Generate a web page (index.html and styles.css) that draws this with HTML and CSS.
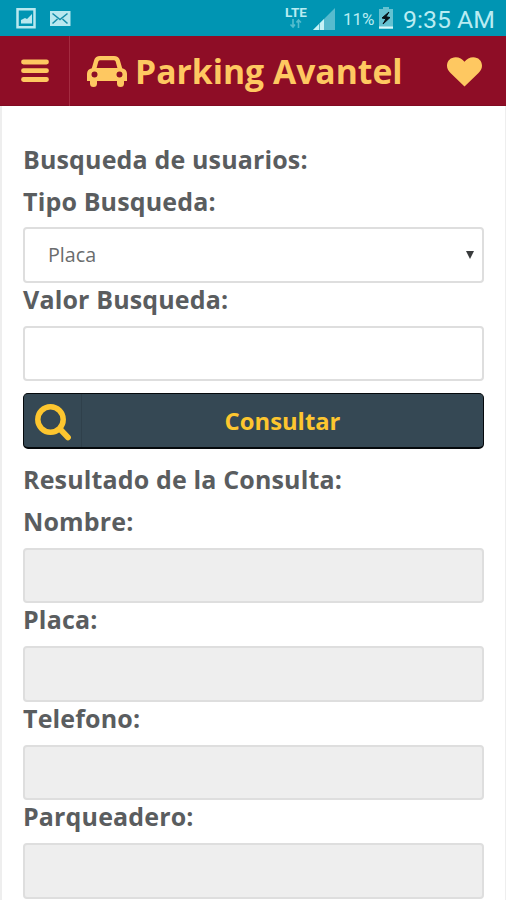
FILE: index.html
```html
<!DOCTYPE html>
<html lang="es">
<head>
<meta charset="utf-8">
<title>Parking Avantel</title>
<link rel="stylesheet" href="styles.css">
</head>
<body>
<div class="status">
  <svg class="notifications" width="56" height="24" viewBox="0 0 56 24">
    <path d="M1.500 2.200h17v18h-17z" fill="none" stroke="#b9e8ef" stroke-width="2.500"/>
    <path d="M5 16.500V13l4-2 2 1 5-5v9.500z" fill="#b9e8ef"/>
    <path d="M34 4h20.500v15H34z" fill="#b9e8ef"/>
    <path d="M36.500 6.500l7.500 6 7.500-6M36.500 16.500l5-4.500M51.500 16.500l-5-4.500" fill="none" stroke="#168eaa" stroke-width="1.600"/>
  </svg>
  <div class="network"><span class="lte">LTE</span>
    <svg width="14" height="10" viewBox="0 0 14 10"><path d="M4 0v8M1.500 5.500L4 8l2-2.500M9.500 9V1M7.500 3.500l2-2.500 2.500 2.500" fill="none" stroke="#55bdce" stroke-width="1.600"/></svg>
  </div>
  <svg class="signal" width="24" height="24" viewBox="0 0 24 24"><path d="M1 23L23 1v22z" fill="#57bbce"/><path d="M1 23L12 12v11z" fill="#c7f2f6"/><path d="M7.500 16v7" stroke="#57bbce"/></svg>
  <span class="percent">11%</span>
  <svg class="battery" width="16" height="24" viewBox="0 0 16 24"><path d="M5 0h6v2h4v20H1V2h4z" fill="#65c2d1"/><path d="M1 19.500h14v2H1z" fill="#d8f8fa"/><path d="M11 5L4 11l4 .8-3 5.200 7-6.500-4-.8z" fill="#061116" stroke="#061116"/></svg>
  <span class="time">9:35 AM</span>
</div>
<header class="bar">
  <div class="menu"><svg width="28" height="24" viewBox="0 0 28 24"><path d="M2.500 3h23M2.500 11.700h23M2.500 20.500h23" stroke="#fec861" stroke-width="4.800" stroke-linecap="round"/></svg></div>
  <svg class="car" width="40" height="32" viewBox="0 0 40 32"><path fill="#fec861" fill-rule="evenodd" d="M13 0h14c3 0 5 1.500 5.800 4l2.400 8.200c2.800.5 4.800 2.600 4.800 5.500V25h-3v2.500a3.500 3.500 0 0 1-7 0V25H10v2.500a3.500 3.500 0 0 1-7 0V25H0v-7.300c0-2.900 2-5 4.800-5.500L7.200 4C8 1.500 10 0 13 0zM13.500 4.200c-1.200 0-1.900.5-2.200 1.500L9.600 12h20.800l-1.700-6.300c-.3-1-1-1.500-2.200-1.500zM7.500 15.500a3 3 0 1 0 0 6 3 3 0 0 0 0-6zM32.500 15.500a3 3 0 1 0 0 6 3 3 0 0 0 0-6z"/></svg>
  <h1 class="title">Parking Avantel</h1>
  <svg class="heart" width="35" height="30" viewBox="0 0 35 30"><path fill="#fec861" d="M17.500 29.500L3.500 16C1.200 13.700 0 11.300 0 8.700 0 3.700 3.700.2 8.700.2c3.600 0 6.700 1.700 8.800 4.600C19.600 1.900 22.700.2 26.300.2c5 0 8.700 3.500 8.700 8.500 0 2.600-1.200 5-3.500 7.300z"/></svg>
</header>
<main class="page">
  <h2 class="label heading">Busqueda de usuarios:</h2>
  <div class="label heading">Tipo Busqueda:</div>
  <div class="field select"><span class="value">Placa</span><svg width="8" height="8" viewBox="0 0 8 8"><path d="M0 0h8L4 8z" fill="#393b3c"/></svg></div>
  <div class="label">Valor Busqueda:</div>
  <div class="field"></div>
  <div class="button">
    <div class="search"><svg width="36" height="37" viewBox="0 0 36 37"><circle cx="15.500" cy="15.500" r="12.700" fill="none" stroke="#fdc62f" stroke-width="5.500"/><path d="M25 25l8 8.500" stroke="#fdc62f" stroke-width="5.800" stroke-linecap="round"/></svg></div>
    <span class="caption">Consultar</span>
  </div>
  <h2 class="label heading result">Resultado de la Consulta:</h2>
  <div class="label heading">Nombre:</div>
  <div class="field disabled"></div>
  <div class="label">Placa:</div>
  <div class="field disabled"></div>
  <div class="label">Telefono:</div>
  <div class="field disabled"></div>
  <div class="label">Parqueadero:</div>
  <div class="field disabled"></div>
</main>
</body>
</html>
```
FILE: styles.css
```css
* { box-sizing: border-box; }
body {
  margin: 0;
  height: 900px;
  overflow: hidden;
  background: #fff;
  font-family: "Open Sans", sans-serif;
  color: #5a5d5f;
}
svg { display: block; flex: none; }
.status {
  display: flex;
  align-items: flex-start;
  height: 36px;
  padding: 7px 12px 0 16px;
  background: #0095b3;
  color: #b9ecf2;
  font-family: Roboto, sans-serif;
}
.network {
  display: flex;
  flex-direction: column;
  align-items: center;
  width: 24px;
  margin: -2px 4px 0 auto;
}
.lte { font-size: 13.5px; line-height: 14px; font-weight: 700; }
.percent { width: 32px; margin-left: 7px; font-size: 17px; line-height: 24px; white-space: nowrap; }
.battery { margin-left: 3px; }
.time { width: 91px; margin-left: 9px; font-size: 24.8px; line-height: 25px; white-space: nowrap; }
.bar {
  display: flex;
  align-items: center;
  height: 70px;
  padding-right: 24px;
  background: #8e0d26;
  border-bottom: 1px solid #820b22;
}
.menu {
  display: flex;
  align-items: center;
  width: 70px;
  height: 70px;
  padding-left: 21px;
  border-right: 1px solid #a42b40;
}
.car { margin: 3px 0 0 17px; }
.title { margin: 0 0 0 8px; color: #fec861; font-size: 33.7px; line-height: 46px; font-weight: 700; white-space: nowrap; }
.heart { margin: 2px 0 0 auto; }
.page {
  height: 794px;
  padding: 36.5px 21px 0 21px;
  border-left: 2px solid #eee;
  border-right: 1px solid #eee;
}
.label { height: 43px; margin: 0; font-size: 25px; line-height: 32.2px; font-weight: 700; letter-spacing: .15px; white-space: nowrap; }
.heading { height: 42.4px; }
.field { height: 55.5px; border: 2px solid #dedede; border-radius: 4px; }
.select { display: flex; align-items: center; justify-content: space-between; padding: 0 8px 0 23px; font-size: 19.7px; color: #6a6c6d; }
.value { padding-bottom: 2px; }
.disabled { background: #eee; }
.button {
  display: flex;
  height: 56px;
  margin-top: 11.5px;
  background: #354854;
  border: 1.5px solid #05090c;
  border-bottom-width: 2px;
  border-radius: 5px;
  color: #fdc62f;
}
.search { display: flex; align-items: center; width: 58px; padding-left: 11px; border-right: 1px solid #2f404b; padding-top: 4px; }
.caption { flex: 1; text-align: center; font-size: 23.8px; line-height: 54px; font-weight: 700; }
.result { margin-top: 14px; }
```
